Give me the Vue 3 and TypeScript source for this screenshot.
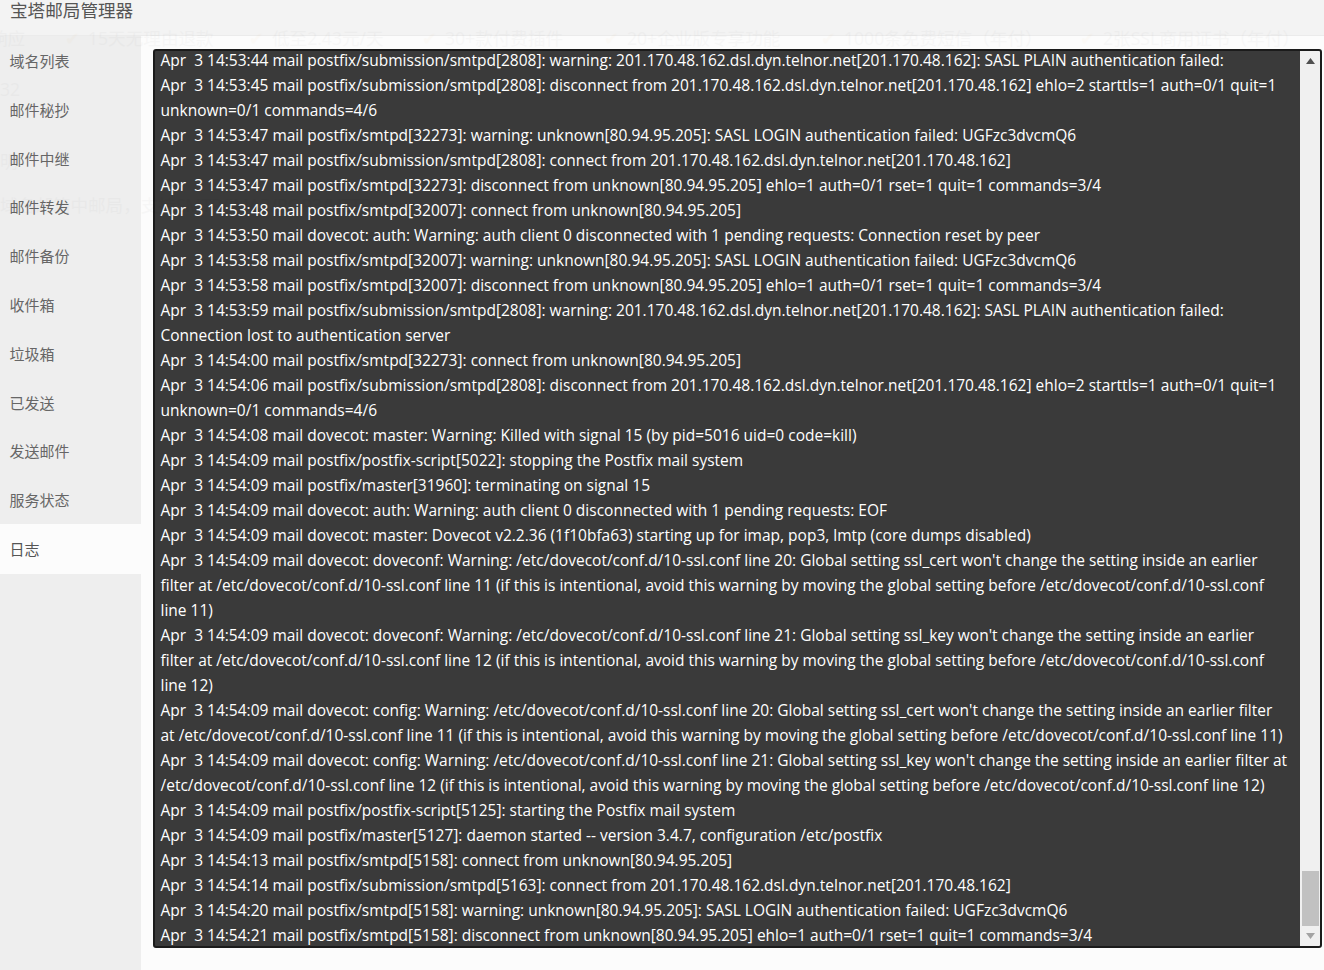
<script setup lang="ts">
const menu: string[] = ['域名列表','邮件秘抄','邮件中继','邮件转发','邮件备份','收件箱','垃圾箱','已发送','发送邮件','服务状态','日志']
const ghosts: { text: string; cls: string }[] = [
  { text: '15天无理由退款', cls: 'g1' },
  { text: '低至2.43元/天', cls: 'g2' },
  { text: '30+款付费插件', cls: 'g3' },
  { text: '20+企业版专享功能', cls: 'g4' },
  { text: '1000条免费短信（年付）', cls: 'g5' },
  { text: '2张SSL商用证书（年付）', cls: 'g6' },
]
const logs: string[] = [
'Apr  3 14:53:44 mail postfix/submission/smtpd[2808]: warning: 201.170.48.162.dsl.dyn.telnor.net[201.170.48.162]: SASL PLAIN authentication failed:',
'Apr  3 14:53:45 mail postfix/submission/smtpd[2808]: disconnect from 201.170.48.162.dsl.dyn.telnor.net[201.170.48.162] ehlo=2 starttls=1 auth=0/1 quit=1',
'unknown=0/1 commands=4/6',
'Apr  3 14:53:47 mail postfix/smtpd[32273]: warning: unknown[80.94.95.205]: SASL LOGIN authentication failed: UGFzc3dvcmQ6',
'Apr  3 14:53:47 mail postfix/submission/smtpd[2808]: connect from 201.170.48.162.dsl.dyn.telnor.net[201.170.48.162]',
'Apr  3 14:53:47 mail postfix/smtpd[32273]: disconnect from unknown[80.94.95.205] ehlo=1 auth=0/1 rset=1 quit=1 commands=3/4',
'Apr  3 14:53:48 mail postfix/smtpd[32007]: connect from unknown[80.94.95.205]',
'Apr  3 14:53:50 mail dovecot: auth: Warning: auth client 0 disconnected with 1 pending requests: Connection reset by peer',
'Apr  3 14:53:58 mail postfix/smtpd[32007]: warning: unknown[80.94.95.205]: SASL LOGIN authentication failed: UGFzc3dvcmQ6',
'Apr  3 14:53:58 mail postfix/smtpd[32007]: disconnect from unknown[80.94.95.205] ehlo=1 auth=0/1 rset=1 quit=1 commands=3/4',
'Apr  3 14:53:59 mail postfix/submission/smtpd[2808]: warning: 201.170.48.162.dsl.dyn.telnor.net[201.170.48.162]: SASL PLAIN authentication failed:',
'Connection lost to authentication server',
'Apr  3 14:54:00 mail postfix/smtpd[32273]: connect from unknown[80.94.95.205]',
'Apr  3 14:54:06 mail postfix/submission/smtpd[2808]: disconnect from 201.170.48.162.dsl.dyn.telnor.net[201.170.48.162] ehlo=2 starttls=1 auth=0/1 quit=1',
'unknown=0/1 commands=4/6',
'Apr  3 14:54:08 mail dovecot: master: Warning: Killed with signal 15 (by pid=5016 uid=0 code=kill)',
'Apr  3 14:54:09 mail postfix/postfix-script[5022]: stopping the Postfix mail system',
'Apr  3 14:54:09 mail postfix/master[31960]: terminating on signal 15',
'Apr  3 14:54:09 mail dovecot: auth: Warning: auth client 0 disconnected with 1 pending requests: EOF',
'Apr  3 14:54:09 mail dovecot: master: Dovecot v2.2.36 (1f10bfa63) starting up for imap, pop3, lmtp (core dumps disabled)',
"Apr  3 14:54:09 mail dovecot: doveconf: Warning: /etc/dovecot/conf.d/10-ssl.conf line 20: Global setting ssl_cert won't change the setting inside an earlier",
'filter at /etc/dovecot/conf.d/10-ssl.conf line 11 (if this is intentional, avoid this warning by moving the global setting before /etc/dovecot/conf.d/10-ssl.conf',
'line 11)',
"Apr  3 14:54:09 mail dovecot: doveconf: Warning: /etc/dovecot/conf.d/10-ssl.conf line 21: Global setting ssl_key won't change the setting inside an earlier",
'filter at /etc/dovecot/conf.d/10-ssl.conf line 12 (if this is intentional, avoid this warning by moving the global setting before /etc/dovecot/conf.d/10-ssl.conf',
'line 12)',
"Apr  3 14:54:09 mail dovecot: config: Warning: /etc/dovecot/conf.d/10-ssl.conf line 20: Global setting ssl_cert won't change the setting inside an earlier filter",
'at /etc/dovecot/conf.d/10-ssl.conf line 11 (if this is intentional, avoid this warning by moving the global setting before /etc/dovecot/conf.d/10-ssl.conf line 11)',
"Apr  3 14:54:09 mail dovecot: config: Warning: /etc/dovecot/conf.d/10-ssl.conf line 21: Global setting ssl_key won't change the setting inside an earlier filter at",
'/etc/dovecot/conf.d/10-ssl.conf line 12 (if this is intentional, avoid this warning by moving the global setting before /etc/dovecot/conf.d/10-ssl.conf line 12)',
'Apr  3 14:54:09 mail postfix/postfix-script[5125]: starting the Postfix mail system',
'Apr  3 14:54:09 mail postfix/master[5127]: daemon started -- version 3.4.7, configuration /etc/postfix',
'Apr  3 14:54:13 mail postfix/smtpd[5158]: connect from unknown[80.94.95.205]',
'Apr  3 14:54:14 mail postfix/submission/smtpd[5163]: connect from 201.170.48.162.dsl.dyn.telnor.net[201.170.48.162]',
'Apr  3 14:54:20 mail postfix/smtpd[5158]: warning: unknown[80.94.95.205]: SASL LOGIN authentication failed: UGFzc3dvcmQ6',
'Apr  3 14:54:21 mail postfix/smtpd[5158]: disconnect from unknown[80.94.95.205] ehlo=1 auth=0/1 rset=1 quit=1 commands=3/4',
]
</script>

<template>
  <div class="page">
    <header class="title">宝塔邮局管理器</header>
    <div class="body">
      <nav class="side">
        <div v-for="m in menu" :key="m" class="item" :class="{ active: m === '日志' }">{{ m }}</div>
      </nav>
      <main class="content">
        <div class="console">
          <div class="log">
            <div v-for="(l, i) in logs" :key="i" class="line">{{ l }}</div>
          </div>
          <div class="bar">
            <svg class="arrow" width="9" height="6" viewBox="0 0 9 6"><path d="M4.5 0 9 6H0z" fill="#505050" /></svg>
            <div class="track"><div class="thumb"></div></div>
            <svg class="arrow" width="9" height="6" viewBox="0 0 9 6"><path d="M0 0h9L4.5 6z" fill="#a3a3a3" /></svg>
          </div>
        </div>
      </main>
    </div>
    <div class="ghost" aria-hidden="true">
      <span class="gt g0">响应</span>
      <span v-for="g in ghosts" :key="g.cls" class="gt" :class="g.cls"><i class="chk">✔</i>{{ g.text }}</span>
      <span class="gt g32">32</span>
      <span class="gt gm">明</span>
      <span class="gt gd">域名邮箱中邮局，支持SMTP/IMAP/POP3/HTTP</span>
    </div>
  </div>
</template>

<style scoped>
.page {
  position: relative;
  width: 1324px;
  height: 970px;
  overflow: hidden;
  background: #fcfcfc;
  font-family: "Open Sans", "Noto Sans CJK SC", sans-serif;
}
.title {
  height: 36px;
  box-sizing: border-box;
  padding-left: 10px;
  background: #f3f3f3;
  border-bottom: 1px solid #ebebeb;
  color: #555;
  font-size: 17.6px;
  line-height: 20px;
}
.body {
  display: flex;
  height: 934px;
}
.side {
  width: 141px;
  flex: none;
  background: #eee;
}
.item {
  height: 48.8px;
  line-height: 50.8px;
  padding-left: 9.5px;
  font-size: 15px;
  color: #666;
}
.item.active {
  height: 50px;
  background: #fcfcfc;
  color: #555;
}
.content {
  flex: 1;
  min-width: 0;
  padding: 13px 2px 0 12px;
}
.console {
  display: flex;
  height: 899px;
  box-sizing: border-box;
  border: 2px solid #1b1b1b;
  border-radius: 3px;
  background: #3a3a3a;
  overflow: hidden;
}
.log {
  flex: 1;
  min-width: 0;
  padding: 0 0 0 5.5px;
  margin-top: -3px;
  overflow: hidden;
}
.line {
  height: 25px;
  line-height: 25px;
  white-space: pre;
  font-size: 15.5px;
  color: #fff;
}
.bar {
  width: 20px;
  flex: none;
  display: flex;
  flex-direction: column;
  align-items: center;
  background: #f0f0f0;
}
.arrow {
  flex: none;
  margin: 7px 0;
}
.track {
  flex: 1;
  width: 100%;
  display: flex;
  flex-direction: column;
  justify-content: flex-end;
  padding: 0 1px 0 2px;
  box-sizing: border-box;
}
.thumb {
  height: 55px;
  background: #c1c1c1;
}
.ghost {
  position: absolute;
  inset: 0;
  pointer-events: none;
  color: #000;
  opacity: 0.02;
  font-size: 17.6px;
  line-height: 22px;
}
.gt {
  position: absolute;
  top: 27px;
  white-space: nowrap;
}
.chk {
  position: absolute;
  left: -23px;
  font-style: normal;
  color: #e08a00;
}
.g0 { left: -10px; }
.g1 { left: 88px; }
.g2 { left: 272px; }
.g3 { left: 445px; }
.g4 { left: 627px; }
.g5 { left: 844px; }
.g6 { left: 1103px; }
.g32 { left: 0; top: 78px; }
.gm { left: 0; top: 150px; }
.gd { left: 0; top: 194px; }
</style>

<style>
html, body { margin: 0; background: #fcfcfc; }
</style>
